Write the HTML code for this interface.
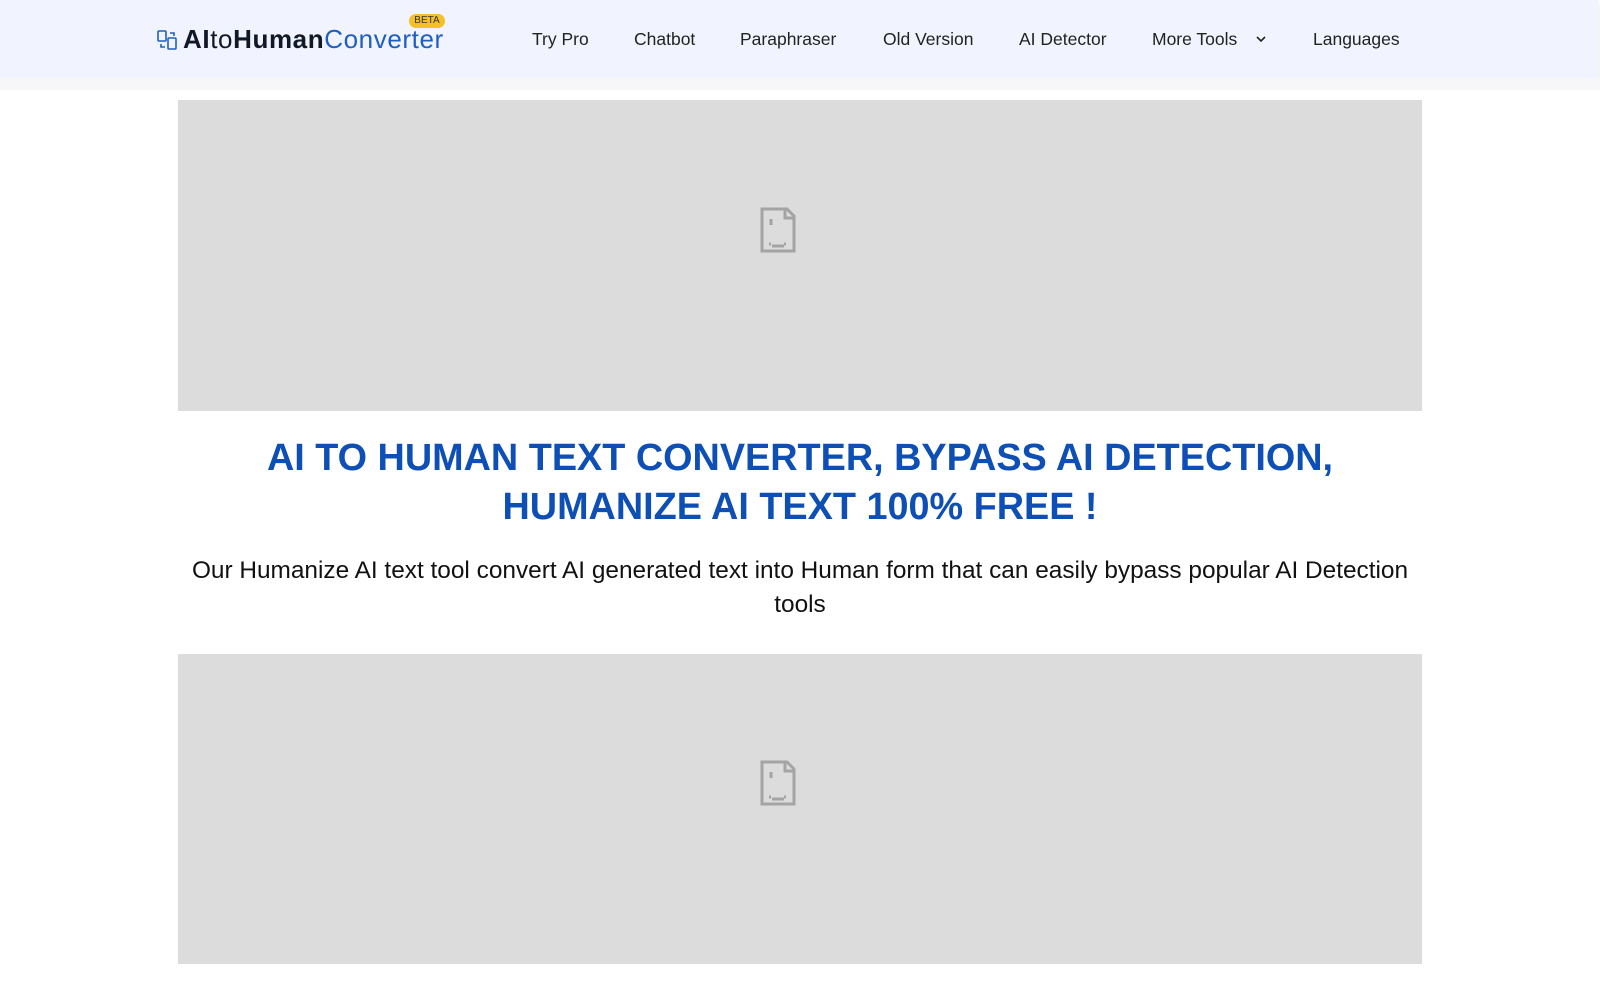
<!DOCTYPE html>
<html><head><meta charset="utf-8"><style>
body{margin:0;background:#fff;font-family:"Liberation Sans",Arial,sans-serif;width:1600px;height:1000px;overflow:hidden}
.hdr{position:absolute;left:0;top:0;width:1598px;height:78px;background:#f1f4ff;box-shadow:0 3px 6px rgba(0,0,0,.12)}
.band{position:absolute;left:0;top:78px;width:1600px;height:12px;background:#f7f7f9}
.logo{position:absolute;left:157px;top:24px;font-size:26px;white-space:nowrap;letter-spacing:0.6px}
.logo b{color:#111827}.logo .t{color:#111827}.logo .c{color:#1f5fbf}
.beta{position:absolute;left:409px;top:14px;width:36px;height:14px;background:#f5c024;border-radius:7px;font-size:10px;color:#333;text-align:center;line-height:14px}
.nav a{position:absolute;top:29px;font-size:17.5px;color:#222;text-decoration:none}
.ph{position:absolute;left:178px;width:1244px;background:#dcdcdc}
h1{position:absolute;top:434px;left:178px;width:1244px;margin:0;text-align:center;font-size:37.8px;line-height:49px;color:#0d4fb5;font-weight:bold}
p{position:absolute;top:554px;left:178px;width:1244px;margin:0;text-align:center;font-size:24.4px;line-height:34px;color:#111}
</style></head><body>
<div class="hdr"></div><div class="band"></div>
<div class="logo"><svg width="22" height="22" viewBox="0 0 22 22" style="vertical-align:-3px;margin-right:4px" fill="none" stroke="#1f5fbf" stroke-width="1.6"><rect x="1" y="2" width="8" height="10" rx="1"/><rect x="11" y="9" width="8" height="11" rx="1"/><path d="M13 4h4v3M4 15v3h4"/></svg><b>AI</b><span class="t">to</span><b>Human</b><span class="c">Converter</span></div>
<div class="beta">BETA</div>
<div class="nav">
<a style="left:532px">Try Pro</a><a style="left:634px">Chatbot</a><a style="left:740px">Paraphraser</a><a style="left:883px">Old Version</a><a style="left:1019px">AI Detector</a><a style="left:1152px">More Tools</a>
<svg style="position:absolute;left:1255px;top:35px" width="12" height="8" viewBox="0 0 12 8" fill="none" stroke="#222" stroke-width="1.6"><path d="M2 2l4 4 4-4"/></svg>
<a style="left:1313px">Languages</a>
</div>
<div class="ph" style="top:100px;height:311px"></div>
<svg style="position:absolute;left:760px;top:207px" width="36" height="46" viewBox="0 0 36 46" fill="none" stroke="#a4a4a4" stroke-width="3"><path d="M2 2h25l7 7v35H2z"/><path d="M25 2v9h9"/><path d="M11 12v6M12 39h12M9 37h2M24 37h2"/></svg>
<h1>AI TO HUMAN TEXT CONVERTER, BYPASS AI DETECTION,<br>HUMANIZE AI TEXT 100% FREE !</h1>
<p>Our Humanize AI text tool convert AI generated text into Human form that can easily bypass popular AI Detection<br>tools</p>
<div class="ph" style="top:654px;height:310px"></div>
<svg style="position:absolute;left:760px;top:760px" width="36" height="46" viewBox="0 0 36 46" fill="none" stroke="#a4a4a4" stroke-width="3"><path d="M2 2h25l7 7v35H2z"/><path d="M25 2v9h9"/><path d="M11 12v6M12 39h12M9 37h2M24 37h2"/></svg>
</body></html>
